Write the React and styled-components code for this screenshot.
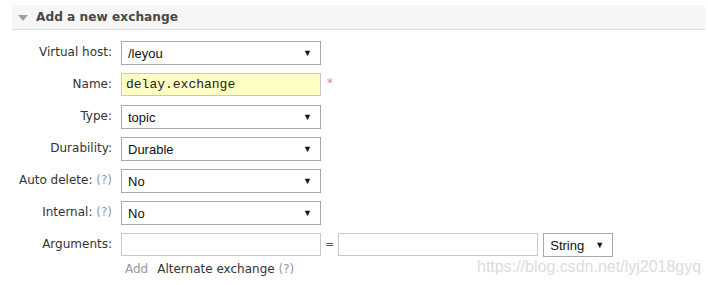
import React from 'react'
import styled, { createGlobalStyle } from "styled-components";

const Global = createGlobalStyle`
  body {
    margin: 0;
    background: #fff;
    font-family: "DejaVu Sans", Verdana, sans-serif;
  }
`;

const Page = styled.div`
  position: relative;
  width: 708px;
  height: 285px;
  padding-top: 5px;
  box-sizing: border-box;
  overflow: hidden;
`;

const Header = styled.div`
  margin: 0 3px 0 12px;
  height: 24px;
  background: #f6f6f6;
  border-bottom: 1px solid #dddddd;
  display: flex;
  align-items: center;
  padding-left: 6px;
  gap: 8px;
  color: #484848;
  font-weight: bold;
  font-size: 12.2px;
`;

const Triangle = styled.span`
  width: 0;
  height: 0;
  border-left: 5px solid transparent;
  border-right: 5px solid transparent;
  border-top: 6px solid #a0a0a0;
  margin-top: 1px;
`;

const Form = styled.div`
  display: flex;
  flex-direction: column;
  padding-top: 11px;
`;

const Row = styled.div`
  display: flex;
  align-items: flex-start;
  height: 32px;
`;

const Label = styled.div`
  width: 112px;
  line-height: 23px;
  text-align: right;
  font-size: 12px;
  color: #333;
  padding-right: 9px;
  white-space: nowrap;
`;

const Help = styled.span`
  color: #999;
`;

const SelectBox = styled.div`
  box-sizing: border-box;
  width: ${p => p.$w || 200}px;
  height: 24px;
  border: 1px solid #a9a9a9;
  display: flex;
  align-items: center;
  justify-content: space-between;
  padding: 0 8px 0 6px;
  font-family: "Liberation Sans", Arial, sans-serif;
  font-size: 13px;
  color: #111;
  background: #fff;
`;

const Arrow = styled.span`
  font-size: 9px;
  color: #111;
`;

const Input = styled.div`
  box-sizing: border-box;
  width: 200px;
  height: 23px;
  border: 1px solid #c8c8c8;
  background: ${p => (p.$yellow ? "#ffffc4" : "#fff")};
  display: flex;
  align-items: center;
  padding-left: 4px;
  font-family: "Liberation Mono", "Courier New", monospace;
  font-size: 13px;
  color: #222;
`;

const Star = styled.span`
  color: #f08a98;
  font-size: 12px;
  margin-left: 6px;
  margin-top: 3px;
`;

const Equals = styled.span`
  font-size: 11px;
  line-height: 23px;
  color: #555;
  margin: 0 4px 0 4px;
`;

const Gap = styled.span`
  width: 5px;
`;

const Links = styled.div`
  margin-left: 125px;
  font-size: 12px;
  color: #333;
  display: flex;
  gap: 9px;
  margin-top: -3px;
`;

const Muted = styled.span`
  color: #999;
`;

const Watermark = styled.div`
  position: absolute;
  left: 477px;
  top: 258px;
  font-family: "Liberation Sans", Arial, sans-serif;
  font-size: 16px;
  color: #dcdcdc;
`;

const Select = ({ children, w }) => (
  <SelectBox $w={w}>
    <span>{children}</span>
    <Arrow>▼</Arrow>
  </SelectBox>
);

const App = () => {
  return (
    <Page>
      <Global />
      <Header>
        <Triangle />
        Add a new exchange
      </Header>
      <Form>
        <Row>
          <Label>Virtual host:</Label>
          <Select>/leyou</Select>
        </Row>
        <Row>
          <Label>Name:</Label>
          <Input $yellow>delay.exchange</Input>
          <Star>*</Star>
        </Row>
        <Row>
          <Label>Type:</Label>
          <Select>topic</Select>
        </Row>
        <Row>
          <Label>Durability:</Label>
          <Select>Durable</Select>
        </Row>
        <Row>
          <Label>Auto delete: <Help>(?)</Help></Label>
          <Select>No</Select>
        </Row>
        <Row>
          <Label>Internal: <Help>(?)</Help></Label>
          <Select>No</Select>
        </Row>
        <Row>
          <Label>Arguments:</Label>
          <Input />
          <Equals>=</Equals>
          <Input />
          <Gap />
          <Select w={70}>String</Select>
        </Row>
        <Links>
          <Muted>Add</Muted>
          <span>Alternate exchange <Help>(?)</Help></span>
        </Links>
      </Form>
      <Watermark>https://blog.csdn.net/lyj2018gyq</Watermark>
    </Page>
  );
};

export default App
